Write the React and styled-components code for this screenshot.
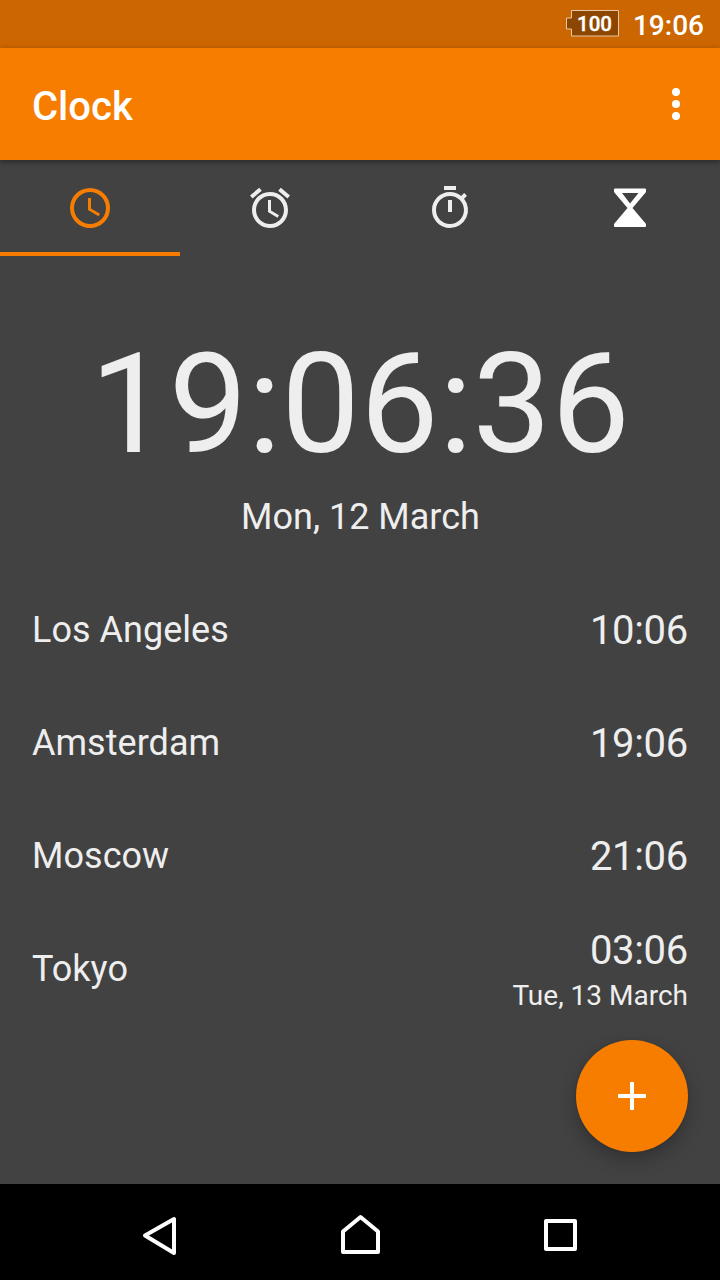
import React from 'react';
import styled, { createGlobalStyle } from 'styled-components';

const GlobalStyle = createGlobalStyle`
  * { box-sizing: border-box; }
  body { margin: 0; background: #424242; }
`;

const Screen = styled.div`
  display: flex;
  flex-direction: column;
  width: 720px;
  height: 1280px;
  overflow: hidden;
  background: #424242;
  color: #eeeeee;
  font-family: Roboto, 'Liberation Sans', sans-serif;
`;

const StatusBar = styled.div`
  display: flex;
  flex: 0 0 48px;
  justify-content: flex-end;
  gap: 14px;
  height: 48px;
  padding-right: 16px;
  background: #cc6600;
  color: #ffffff;
`;

const StatusTime = styled.span`
  padding-top: 3px;
  font-size: 28px;
  font-weight: 500;
  line-height: 45px;
`;

const BatteryIcon = styled.svg`
  display: block;
  width: 54px;
  height: 48px;
`;

const AppBar = styled.header`
  position: relative;
  display: flex;
  flex: 0 0 112px;
  align-items: center;
  justify-content: space-between;
  padding: 0 20px 0 32px;
  background: #f77d00;
  box-shadow: 0 2px 6px rgba(0, 0, 0, 0.4);
  color: #ffffff;
`;

const Title = styled.h1`
  margin: 0;
  padding-top: 6px;
  font-size: 40px;
  font-weight: 500;
  line-height: 48px;
`;

const Icon = styled.svg`
  display: block;
  width: 48px;
  height: 48px;
  fill: currentColor;
`;

const Tabs = styled.nav`
  display: grid;
  flex: 0 0 96px;
  grid-template-columns: repeat(4, 1fr);
`;

const Tab = styled.div`
  display: flex;
  justify-content: center;
  padding-top: 24px;
  border-bottom: 4px solid ${({ $active }) => ($active ? '#f77d00' : 'transparent')};
  color: ${({ $active }) => ($active ? '#f77d00' : '#eeeeee')};
`;

const Content = styled.main`
  position: relative;
  display: flex;
  flex: 1;
  flex-direction: column;
`;

const CurrentTime = styled.div`
  padding-top: 66px;
  font-size: 140px;
  line-height: 164px;
  text-align: center;
`;

const CurrentDate = styled.div`
  padding: 10px 0 0 1px;
  font-size: 36px;
  line-height: 42px;
  text-align: center;
`;

const CityList = styled.div`
  padding-top: 36px;
`;

const CityRow = styled.div`
  display: flex;
  align-items: center;
  justify-content: space-between;
  height: 113px;
  padding: 0 32px;
`;

const CityName = styled.div`
  padding-bottom: 2px;
  font-size: 36px;
  letter-spacing: 0.03px;
  line-height: 42px;
`;

const CityClock = styled.div`
  text-align: right;
`;

const CityTime = styled.div`
  font-size: 40px;
  letter-spacing: -0.3px;
  line-height: 47px;
`;

const CityDate = styled.div`
  padding-top: 5px;
  font-size: 28px;
  line-height: 33px;
`;

const AddButton = styled.div`
  position: absolute;
  right: 32px;
  bottom: 32px;
  display: flex;
  align-items: center;
  justify-content: center;
  width: 112px;
  height: 112px;
  border-radius: 50%;
  background: #f77d00;
  box-shadow: 0 8px 18px rgba(0, 0, 0, 0.25), 0 0 3px rgba(0, 0, 0, 0.12);
  color: #ffffff;
`;

const NavBar = styled.footer`
  display: flex;
  flex: 0 0 96px;
  align-items: center;
  justify-content: center;
  gap: 104px;
  background: #000000;
`;

const NavIcon = styled.svg`
  width: 96px;
  height: 96px;
  fill: none;
  stroke: #ffffff;
  stroke-width: 4;
  stroke-linejoin: round;
`;

const cities = [
  { name: 'Los Angeles', time: '10:06' },
  { name: 'Amsterdam', time: '19:06' },
  { name: 'Moscow', time: '21:06' },
  { name: 'Tokyo', time: '03:06', date: 'Tue, 13 March' },
];

const Battery = () => (
  <BatteryIcon viewBox="0 0 54 48">
    <path d="M6.5 10.5h47V36h-47v-7h-5V18h5z" fill="#8c4600" stroke="#e8c8a8" />
    <text x="29.5" y="30.5" fill="#fff" fontSize="20.5" fontWeight="500" textAnchor="middle" stroke="#fff" strokeWidth="0.4">100</text>
  </BatteryIcon>
);

const ClockIcon = () => (
  <Icon viewBox="0 0 24 24">
    <path d="M12 2a10 10 0 1 0 0 20 10 10 0 0 0 0-20zm0 18a8 8 0 1 1 0-16 8 8 0 0 1 0 16z" />
    <path d="M12.5 7H11v6l5.25 3.15.75-1.23-4.5-2.67z" />
  </Icon>
);

const AlarmIcon = () => (
  <Icon viewBox="0 0 24 24">
    <path d="M22 5.72l-4.6-3.86-1.29 1.53 4.6 3.86L22 5.72zM7.88 3.39L6.6 1.86 2 5.71l1.29 1.53 4.59-3.85zM12.5 8H11v6l4.75 2.85.75-1.23-4-2.37V8zM12 4c-4.97 0-9 4.03-9 9s4.02 9 9 9a9 9 0 0 0 0-18zm0 16c-3.87 0-7-3.13-7-7s3.13-7 7-7 7 3.13 7 7-3.13 7-7 7z" />
  </Icon>
);

const StopwatchIcon = () => (
  <Icon viewBox="0 0 24 24">
    <path d="M15 1H9v2h6V1zm-4 13h2V8h-2v6zm8.03-6.61l1.42-1.42c-.43-.51-.9-.99-1.41-1.41l-1.42 1.42A8.96 8.96 0 0 0 12 4c-4.97 0-9 4.03-9 9s4.02 9 9 9a8.994 8.994 0 0 0 7.03-14.61zM12 20c-3.87 0-7-3.13-7-7s3.13-7 7-7 7 3.13 7 7-3.13 7-7 7z" />
  </Icon>
);

const HourglassIcon = () => (
  <Icon viewBox="0 0 48 48">
    <path fill="#fff" fillRule="evenodd" d="M9 4.5h30q1 0 1 1V8L26.5 24 40 40v2q0 1-1 1H9q-1 0-1-1v-2l13.500-16L8 8V5.500q0-1 1-1zM16 9l8 10.500L32.500 9z" />
  </Icon>
);

export default function App() {
  return (
    <>
      <GlobalStyle />
      <Screen>
        <StatusBar>
          <Battery />
          <StatusTime>19:06</StatusTime>
        </StatusBar>
        <AppBar>
          <Title>Clock</Title>
          <Icon viewBox="0 0 24 24">
            <circle cx="12" cy="6" r="2" />
            <circle cx="12" cy="12" r="2" />
            <circle cx="12" cy="18" r="2" />
          </Icon>
        </AppBar>
        <Tabs>
          <Tab $active><ClockIcon /></Tab>
          <Tab><AlarmIcon /></Tab>
          <Tab><StopwatchIcon /></Tab>
          <Tab><HourglassIcon /></Tab>
        </Tabs>
        <Content>
          <CurrentTime>19:06:36</CurrentTime>
          <CurrentDate>Mon, 12 March</CurrentDate>
          <CityList>
            {cities.map((city) => (
              <CityRow key={city.name}>
                <CityName>{city.name}</CityName>
                <CityClock>
                  <CityTime>{city.time}</CityTime>
                  {city.date && <CityDate>{city.date}</CityDate>}
                </CityClock>
              </CityRow>
            ))}
          </CityList>
          <AddButton>
            <Icon viewBox="0 0 24 24">
              <path d="M19 13h-6v6h-2v-6H5v-2h6V5h2v6h6v2z" />
            </Icon>
          </AddButton>
        </Content>
        <NavBar>
          <NavIcon viewBox="0 0 96 96">
            <path d="M33 51.500L62 35v34z" />
          </NavIcon>
          <NavIcon viewBox="0 0 96 96">
            <path d="M31 68V47.500L48.500 33 66 47.500V68z" />
          </NavIcon>
          <NavIcon viewBox="0 0 96 96">
            <path d="M34 37h29v28H34z" />
          </NavIcon>
        </NavBar>
      </Screen>
    </>
  );
}
